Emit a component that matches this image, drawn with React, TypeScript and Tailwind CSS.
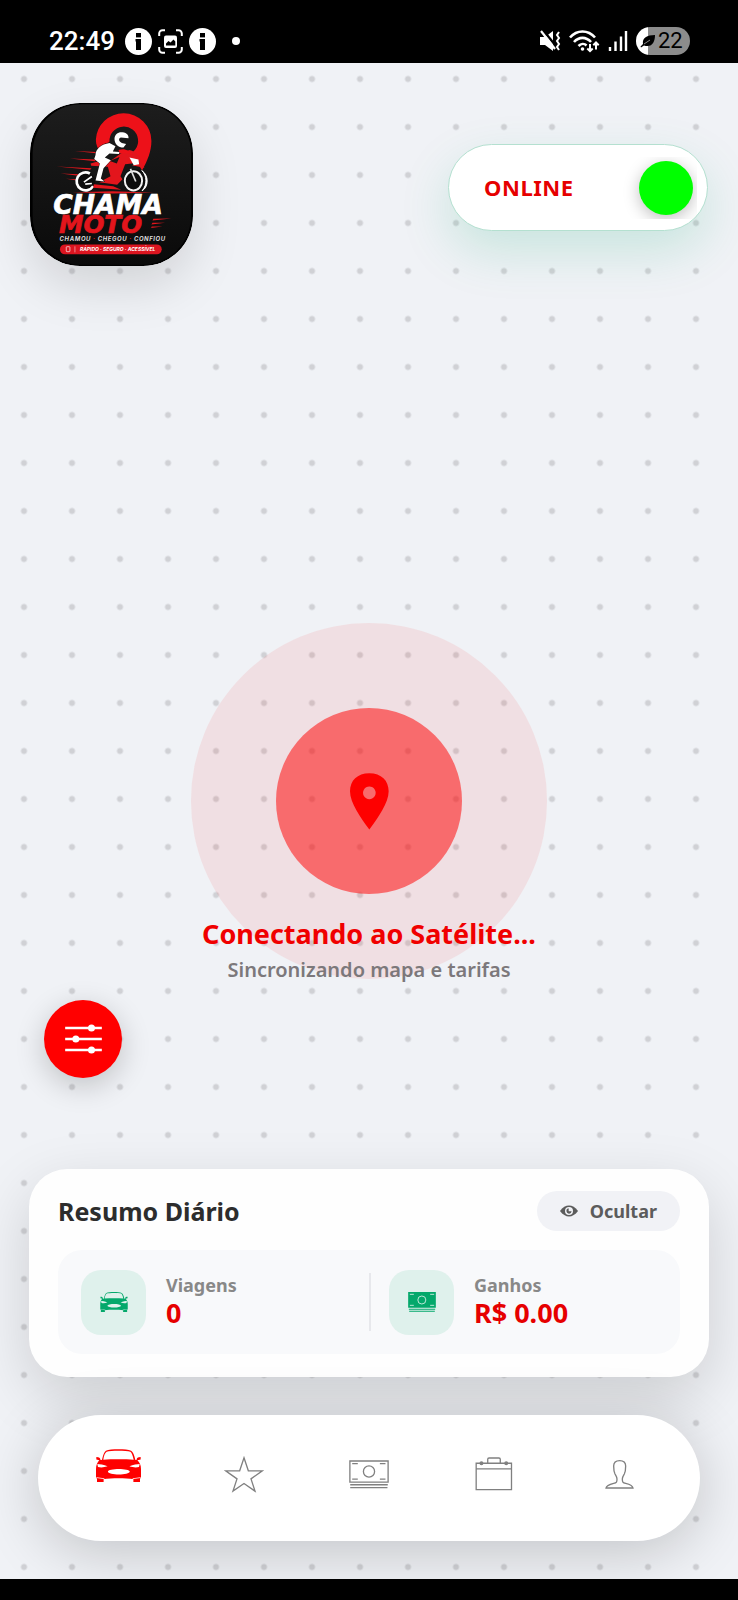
import React, { useState } from "react";

function InfoIcon() {
  return (
    <svg viewBox="0 0 27 27" className="h-[27px] w-[27px]" aria-hidden="true">
      <circle cx="13.5" cy="13.5" r="13.5" fill="#fff" />
      <rect x="11" y="5" width="5" height="4.4" fill="#000" />
      <path d="M10.500 11H16v11h-5v-8.500h-.5z" fill="#000" />
    </svg>
  );
}

function CaptureIcon() {
  return (
    <svg viewBox="0 0 25 25" className="h-[25px] w-[25px]" fill="none" aria-hidden="true">
      <path d="M1.200 7V4.500a3.300 3.300 0 0 1 3.300-3.300H7M18 1.200h2.500a3.300 3.300 0 0 1 3.300 3.300V7M23.800 18v2.500a3.300 3.300 0 0 1-3.300 3.300H18M7 23.800H4.500a3.300 3.300 0 0 1-3.300-3.300V18" stroke="#fff" strokeWidth="2" />
      <rect x="6" y="6.500" width="13" height="12.500" rx="2" fill="#fff" />
      <path d="M8 16.500v-2l2.500-2.500 2 1.500 3-3 1.800 2v4z" fill="#000" />
    </svg>
  );
}

function StatusBar() {
  return (
    <header className="flex h-[63px] shrink-0 items-end justify-between bg-black pr-12 pb-2 pl-[49px] text-white">
      <div className="flex h-7 items-center">
        <time className="mr-2.5 font-[Roboto,sans-serif] text-[26px] leading-7 font-medium">22:49</time>
        <div className="flex items-center gap-1.5">
          <InfoIcon />
          <CaptureIcon />
          <InfoIcon />
        </div>
        <span className="ml-4 h-2 w-2 rounded-full bg-white" />
      </div>
      <div className="flex h-7 items-center gap-2">
        <svg viewBox="0 0 22 22" className="h-[22px] w-[22px]" aria-hidden="true">
          <path d="M1 7h5l8-6v20l-8-6H1z" fill="#fff" />
          <path d="M4 0l12 15" stroke="#000" strokeWidth="2.500" />
          <path d="M2 1l14 18" stroke="#fff" strokeWidth="2.200" />
          <path d="M20 2l-2 3 2 3-2 3 2 3-2 3 2 3" stroke="#fff" strokeWidth="2" fill="none" />
        </svg>
        <svg viewBox="0 0 31 24" className="h-6 w-[31px]" fill="none" stroke="#fff" aria-hidden="true">
          <path d="M1 8.500c7-8 18-8 25 0M5 13c5-5.500 12-5.500 17 0M9.500 17c2.500-2.500 6-2.500 8-.5" strokeWidth="2.600" />
          <circle cx="13.500" cy="20" r="1.800" fill="#fff" stroke="none" />
          <path d="M21 15v7M18.300 19.500l2.700 2.700 2.700-2.700M27 20.500v-7M24.300 16.200l2.700-2.700 2.700 2.700" strokeWidth="2" />
        </svg>
        <svg viewBox="0 0 20 22" className="h-[22px] w-5" aria-hidden="true">
          <path d="M2 17v4M7.500 11.500V21M13 6.500V21M18 1v20" stroke="#fff" strokeWidth="2.400" />
        </svg>
        <div className="flex h-7 w-[54px] items-center rounded-full bg-gradient-to-r from-white from-22% to-[#8c8c8c] to-22% pl-1 text-black">
          <svg viewBox="0 0 16 14" className="h-3.5 w-4" aria-hidden="true">
            <path d="M3 10C2 4 7 1 15 1c0 7-3 13-11 10.500L1 13.500l-.5-1z" fill="#000" />
            <path d="M4 10l6-4" stroke="#8c8c8c" strokeWidth="1" />
          </svg>
          <span className="ml-0.5 font-[Roboto,sans-serif] text-[22px] leading-7">22</span>
        </div>
      </div>
    </header>
  );
}

function Logo() {
  return (
    <svg
      viewBox="60 40 490 490"
      role="img"
      aria-label="Chama Moto"
      className="h-[163px] w-[163px] rounded-[50px] shadow-[0_20px_50px_rgba(0,0,0,0.13)]"
    >
      <defs>
        <linearGradient id="plate" x1="0" y1="0" x2="0" y2="1">
          <stop offset="0" stopColor="#1d1d1d" />
          <stop offset="1" stopColor="#0a0a0a" />
        </linearGradient>
      </defs>
      <rect x="60" y="40" width="490" height="490" rx="150" fill="#000" />
      <rect x="68" y="44" width="476" height="482" rx="146" fill="url(#plate)" />
      <path d="M342 71a83 83 0 0 1 83 83c0 30-12 60-28 88l-22-34-24-12a43 43 0 1 0-52-40l-28 32c-8-12-13-22-13-38a83 83 0 0 1 84-79z" fill="#ed1119" />
      <path d="M195 184l65 3-2 4zM180 207l78 3-2 5zM140 231l105 5-4 5zM152 252l72 3-6 5zM168 268l42 2-4 4zM188 308l120-3 124 4-124 3z" fill="#e0161c" />
      <circle cx="226" cy="277" r="30" fill="#0d0d0d" />
      <path d="M240 252a27 27 0 1 0 10 38" fill="none" stroke="#fff" strokeWidth="8" />
      <path d="M222 278l24-17M226 284l20-2" stroke="#fff" strokeWidth="5" />
      <circle cx="375" cy="273" r="34" fill="#0d0d0d" />
      <ellipse cx="371" cy="274" rx="26" ry="29" fill="none" stroke="#f4f4f4" strokeWidth="6" />
      <path d="M396 243c16 15 17 42 1 61 20-12 21-46-1-61z" fill="#fff" stroke="#fff" strokeWidth="3" />
      <path d="M242 222l35-10 22 4 36-26 24-9c22 6 34 20 33 32l12 22-38-8c-20 5-27 24-28 42l-16 17-54-8 34-18-8-28-50-3z" fill="#e3151c" />
      <path d="M300 214l29-12-8 20zM346 224l34-4-28 18-12 34-8-12z" fill="#151515" />
      <path d="M252 284l58 6 24 11-84-6z" fill="#e3151c" />
      <path d="M362 238l16 38" stroke="#ddd" strokeWidth="5" />
      <path d="M359 204l27 6 2 14-16 3z" fill="#fff" />
      <path d="M257 196c0-18 17-32 42-36l18 10-8 16 21 1-3 6-28-1-14 12 18 8-22 24-8 31 11 9-27-3 13-51-17-14z" fill="#fff" stroke="#111" strokeWidth="3" paintOrder="stroke" />
      <path d="M314 148c0-14 12-22 24-20 14 1 20 12 18 18l-23-2c-9 3-5 13 3 16l13 3-8 11c-15 0-27-11-27-26z" fill="#fff" />
      <path d="M326 181c16-6 34 0 43 16-13-7-26-7-39-5z" fill="#ed1119" />
      <text x="130" y="373" fill="#fff" stroke="#fff" strokeWidth="2" className="font-[DejaVu_Sans,sans-serif] text-[80px] font-bold italic">CHAMA</text>
      <text x="147" y="431" fill="#e3151c" stroke="#e3151c" strokeWidth="2" className="font-[DejaVu_Sans,sans-serif] text-[74px] font-bold italic">MOTO</text>
      <path d="M431 388l54-1-57 6zM428 400l38 0-41 5zM426 411l32 0-34 5z" fill="#e3151c" />
      <text x="149" y="454" fill="#ddd" className="font-[Inter,sans-serif] text-[18px] font-bold tracking-widest italic">CHAMOU <tspan fill="#e3151c">·</tspan> CHEGOU <tspan fill="#e3151c">·</tspan> CONFIOU</text>
      <rect x="150" y="465" width="306" height="30" rx="15" fill="#dc1520" />
      <rect x="169" y="472" width="11" height="15" rx="2" fill="none" stroke="#fff" strokeWidth="2" />
      <path d="M195 471v18" stroke="#fff" strokeWidth="1.500" />
      <text x="210" y="486" fill="#fff" className="font-[Inter,sans-serif] text-[15px] font-bold italic">RÁPIDO · SEGURO · ACESSÍVEL</text>
    </svg>
  );
}

function CarIcon({ className }: { className: string }) {
  return (
    <svg viewBox="231 147 136 99" className={className} fill="currentColor" aria-hidden="true">
      <path fillRule="evenodd" d="M249 180c3-15 7-24 12-28 14-6 62-6 76 0 6 4 10 13 13 28l4-1c0-5 3-8 12-8v7l-10 3c7 7 11 15 11 26v28h-3v11h-20v-9c-25-3-65-3-90 0v9h-20v-11h-3v-28c0-11 4-20 10-26l-9-3v-7c9 0 12 3 12 8zM253 179c28-2 65-2 92 0-3-13-6-21-10-24-14-4-59-4-72 0-5 4-8 11-10 24zM235 192c6 0 20 2 31 7-11 4-22 4-29 2zM363 192c-6 0-20 2-31 7 11 4 22 4 29 2zM267 215c0-11 66-11 66 0 0 12-66 12-66 0zM232 234l24 3v-2l-24-3zM366 234l-24 3v-2l24-3z" />
    </svg>
  );
}

function CashIcon() {
  return (
    <svg viewBox="0 0 83 60" className="h-5 w-7" aria-hidden="true">
      <path d="M0 0h83v47H0zM2 50h79v3H2zM3 56h77v3H3z" fill="#04a86b" />
      <circle cx="41" cy="24" r="12" fill="none" stroke="#e0f3ec" strokeWidth="2.500" />
      <path d="M5 7h12M66 7h12M5 40h12M66 40h12" stroke="#e0f3ec" strokeWidth="2.500" />
    </svg>
  );
}

function Stat({ label, value, icon }: { label: string; value: string; icon: React.ReactNode }) {
  return (
    <div className="flex items-center gap-5">
      <div className="flex h-[65px] w-[65px] items-center justify-center rounded-[20px] bg-[#dff1ec] text-[#04a86b]">{icon}</div>
      <div className="pb-1.5">
        <p className="text-[18px] leading-7 font-bold text-[#888]">{label}</p>
        <p className="text-[27px] leading-7 font-bold text-[#e60000]">{value}</p>
      </div>
    </div>
  );
}

function Summary() {
  const [open, setOpen] = useState(true);
  return (
    <section className="mx-[29px] rounded-[38px] bg-[#fefefe] px-[29px] pt-[22px] pb-[23px] shadow-[0_20px_60px_rgba(0,0,0,0.15)]">
      <div className="flex items-center justify-between">
        <h2 className="text-[25px] leading-8 font-bold text-[#2d2d2d]">Resumo Diário</h2>
        <button onClick={() => setOpen(!open)} className="flex h-10 items-center gap-3 rounded-full bg-[#f1f2f6] px-[23px] text-[18px] font-bold text-[#5c5c5c]">
          <svg viewBox="0 0 54 34" className="h-3 w-[18px]" aria-hidden="true">
            <path d="M0 17C16-5 38-5 54 17 38 39 16 39 0 17z" fill="#5c5c5c" />
            <circle cx="27" cy="17" r="12" fill="#f1f2f6" />
            <path d="M26 9a8 8 0 1 0 9 9h-9z" fill="#5c5c5c" />
          </svg>
          {open ? "Ocultar" : "Mostrar"}
        </button>
      </div>
      {open && (
        <div className="mt-[19px] grid h-[104px] grid-cols-2 items-center rounded-[24px] bg-[#f8f9fb]">
          <div className="pl-[23px]">
            <Stat label="Viagens" value="0" icon={<CarIcon className="h-5 w-7" />} />
          </div>
          <div className="flex items-center gap-[18px]">
            <span className="h-[58px] w-0.5 bg-[#e7e8ec]" />
            <Stat label="Ganhos" value="R$ 0.00" icon={<CashIcon />} />
          </div>
        </div>
      )}
    </section>
  );
}

function BottomNav() {
  const item = "flex h-full flex-1 items-center justify-center text-[#808080]";
  return (
    <nav className="mx-[38px] mt-[38px] mb-[38px] flex h-[126px] items-center rounded-full bg-white px-[18px] pb-2 shadow-[0_10px_60px_rgba(0,0,0,0.2)]">
      <a href="#inicio" aria-label="Início" aria-current="page" className="flex h-full flex-1 items-center justify-center pb-[18px] text-[#fe0000]">
        <CarIcon className="h-[33px] w-[45px]" />
      </a>
      <a href="#avaliacoes" aria-label="Avaliações" className={item}>
        <svg viewBox="614 168 120 110" className="h-[37px] w-10" fill="none" stroke="currentColor" strokeWidth="4" aria-hidden="true">
          <path d="M674 173l13 39h42l-34 24 12 37-33-23-33 23 12-37-34-24h42z" />
        </svg>
      </a>
      <a href="#ganhos" aria-label="Ganhos" className={item}>
        <svg viewBox="-33 180 120 88" className="h-[29px] w-10" fill="none" stroke="currentColor" strokeWidth="4" aria-hidden="true">
          <path d="M-31 183H85v64H-31zM-30 255H84M-30 264H83M-24 191h17M60 191h17M-24 238h17M60 238h17" />
          <circle cx="27" cy="215" r="17" />
        </svg>
      </a>
      <a href="#agenda" aria-label="Agenda" className={item}>
        <svg viewBox="344 172 114 103" className="h-[34px] w-[38px]" fill="none" stroke="currentColor" strokeWidth="4" aria-hidden="true">
          <path d="M347 191H454v80H347zM347 208H454M382 191v-12q0-4 4-4h30q4 0 4 4v12" />
          <circle cx="363" cy="191" r="4" fill="currentColor" />
          <circle cx="438" cy="191" r="4" fill="currentColor" />
        </svg>
      </a>
      <a href="#perfil" aria-label="Perfil" className={item}>
        <svg viewBox="731 180 87 87" className="h-[29px] w-[29px]" fill="none" stroke="currentColor" strokeWidth="4" aria-hidden="true">
          <path d="M734 264h81c-1-8-10-11-22-14-9-2-10-4-10-13 0-6 3-10 6-15 3-6 4-14 4-24 0-11-8-16-18-16s-18 5-18 16c0 10 1 18 4 24 3 5 6 9 6 15 0 9-1 11-10 13-12 3-22 6-23 14z" />
        </svg>
      </a>
    </nav>
  );
}

export default function App() {
  const [online, setOnline] = useState(true);
  return (
    <div className="flex min-h-screen flex-col bg-black font-['Noto_Sans','Open_Sans',sans-serif]">
      <StatusBar />
      <main className="flex flex-1 flex-col overflow-hidden bg-[#f0f2f6] bg-[radial-gradient(circle,#d0d1d5_2px,transparent_4px)] bg-[size:48px_48px] bg-[position:0_-8px]">
        <div className="flex items-center justify-between px-[30px] pt-10">
          <div className="pb-1.5">
            <Logo />
          </div>
          <label className="flex h-[87px] w-[260px] items-center justify-between rounded-full border border-[#b4e0d0] bg-white pr-2.5 pl-[35px] shadow-[0_20px_50px_rgba(0,168,107,0.17)]">
            <span className="text-[22px] font-bold tracking-wide text-[#e60000]">{online ? "ONLINE" : "OFFLINE"}</span>
            <span className="flex h-[62px] w-[76px] items-center justify-end overflow-hidden pr-1">
              <input
                type="checkbox"
                role="switch"
                checked={online}
                onChange={() => setOnline(!online)}
                className="h-[54px] w-[54px] appearance-none rounded-full bg-gray-400 shadow-[0_4px_16px_rgba(0,0,0,0.25)] checked:bg-[#00ff00]"
              />
            </span>
          </label>
        </div>

        <section className="flex flex-1 flex-col items-center justify-end pt-24 pb-3.5">
          <div className="relative flex h-[186px] w-[186px] items-center justify-center">
            <span className="absolute -inset-[85px] rounded-full bg-[#f00000]/8" />
            <span className="absolute inset-0 rounded-full bg-[#ff0000]/52" />
            <svg viewBox="509 487 117 170" className="relative h-[57px] w-[39px]" aria-hidden="true">
              <path fillRule="evenodd" d="M567 487c36 0 58 22 58 54 0 35-32 79-58 115-26-36-58-80-58-115 0-32 22-54 58-54zM567 527a19 19 0 1 0 .1 0z" fill="#fe0000" />
            </svg>
          </div>
          <h1 className="relative mt-5 text-[27px] leading-10 font-bold text-[#f00000]">Conectando ao Satélite...</h1>
          <p className="relative text-[20px] leading-8 font-semibold text-[#7c787b]">Sincronizando mapa e tarifas</p>
        </section>

        <button aria-label="Filtros" className="mb-[91px] ml-11 flex h-[78px] w-[78px] shrink-0 items-center justify-center rounded-full bg-[#ff0000] shadow-[0_8px_30px_rgba(0,0,0,0.2)]">
          <svg viewBox="0 0 110 90" className="h-[30px] w-[37px]" stroke="#fff" strokeWidth="7" fill="#fff" aria-hidden="true">
            <path d="M0 12H110M0 45H110M0 78H110" />
            <circle cx="79" cy="12" r="7" />
            <circle cx="32" cy="45" r="7" />
            <circle cx="79" cy="78" r="7" />
          </svg>
        </button>

        <Summary />
        <BottomNav />
      </main>
      <footer className="h-[21px] shrink-0 bg-black" />
    </div>
  );
}
